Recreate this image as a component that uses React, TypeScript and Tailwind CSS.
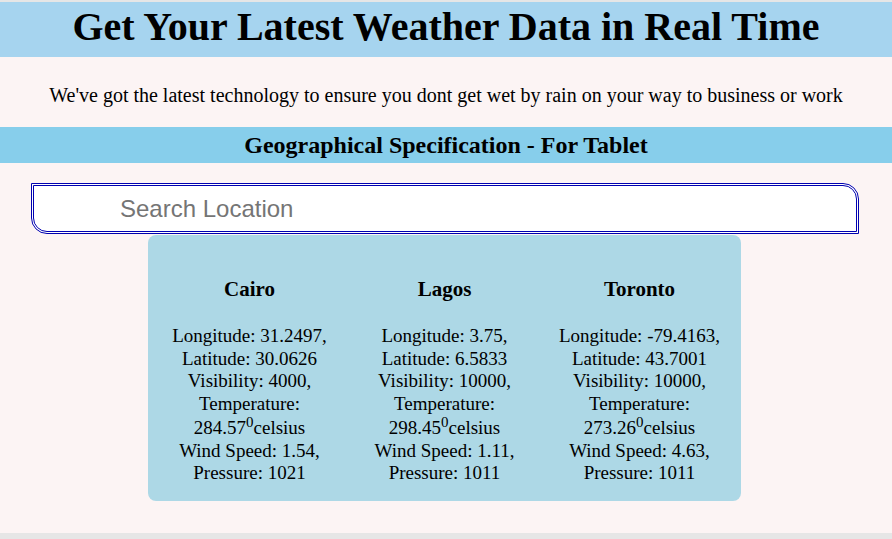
import React from "react";

const cities = [
  { name: "Cairo", lon: "31.2497", lat: "30.0626", vis: "4000", temp: "284.57", wind: "1.54", pres: "1021" },
  { name: "Lagos", lon: "3.75", lat: "6.5833", vis: "10000", temp: "298.45", wind: "1.11", pres: "1011" },
  { name: "Toronto", lon: "-79.4163", lat: "43.7001", vis: "10000", temp: "273.26", wind: "4.63", pres: "1011" },
];

export default function App() {
  return (
    <div className="min-h-[539px] bg-[#e6e6e6] pt-[2px] text-black" style={{ fontFamily: '"Liberation Serif", "Times New Roman", serif' }}>
      <div className="bg-[#fcf4f4] pb-[32px]">
        <header className="h-[55px] bg-[#a6d4ef] flex items-center justify-center pb-[5px]">
          <h1 className="text-[40px] font-bold leading-none">Get Your Latest Weather Data in Real Time</h1>
        </header>
        <div className="h-[70px] pt-[26px] text-center">
          <p className="text-[20px] leading-[24px]">We've got the latest technology to ensure you dont get wet by rain on your way to business or work</p>
        </div>
        <div className="h-[36px] bg-[#87ceeb] flex items-center justify-center">
          <h2 className="text-[24px] font-bold leading-none">Geographical Specification - For Tablet</h2>
        </div>
        <div className="pt-[20px] pl-[31px]">
          <input
            type="text"
            placeholder="Search Location"
            className="w-[828px] h-[51px] bg-white border-[3px] border-double border-[#0000b0] rounded-tr-[16px] rounded-bl-[16px] pl-[86px] text-[24px] outline-none placeholder:text-[#757575]"
            style={{ fontFamily: '"Liberation Sans", Arial, sans-serif' }}
          />
        </div>
        <div className="ml-[148px] mt-[1px] w-[593px] h-[266px] bg-[#add8e6] rounded-[8px] px-[4px] pt-[42px] grid grid-cols-3">
          {cities.map((c) => (
            <div key={c.name} className="text-center">
              <h3 className="text-[21px] font-bold leading-[24px]">{c.name}</h3>
              <div className="mt-[24px] text-[19px] leading-[22.5px]">
                <div>Longitude: {c.lon},</div>
                <div>Latitude: {c.lat}</div>
                <div>Visibility: {c.vis},</div>
                <div>Temperature:</div>
                <div>
                  {c.temp}
                  <span className="text-[15px] leading-none align-[7px]">0</span>celsius
                </div>
                <div>Wind Speed: {c.wind},</div>
                <div>Pressure: {c.pres}</div>
              </div>
            </div>
          ))}
        </div>
      </div>
    </div>
  );
}
